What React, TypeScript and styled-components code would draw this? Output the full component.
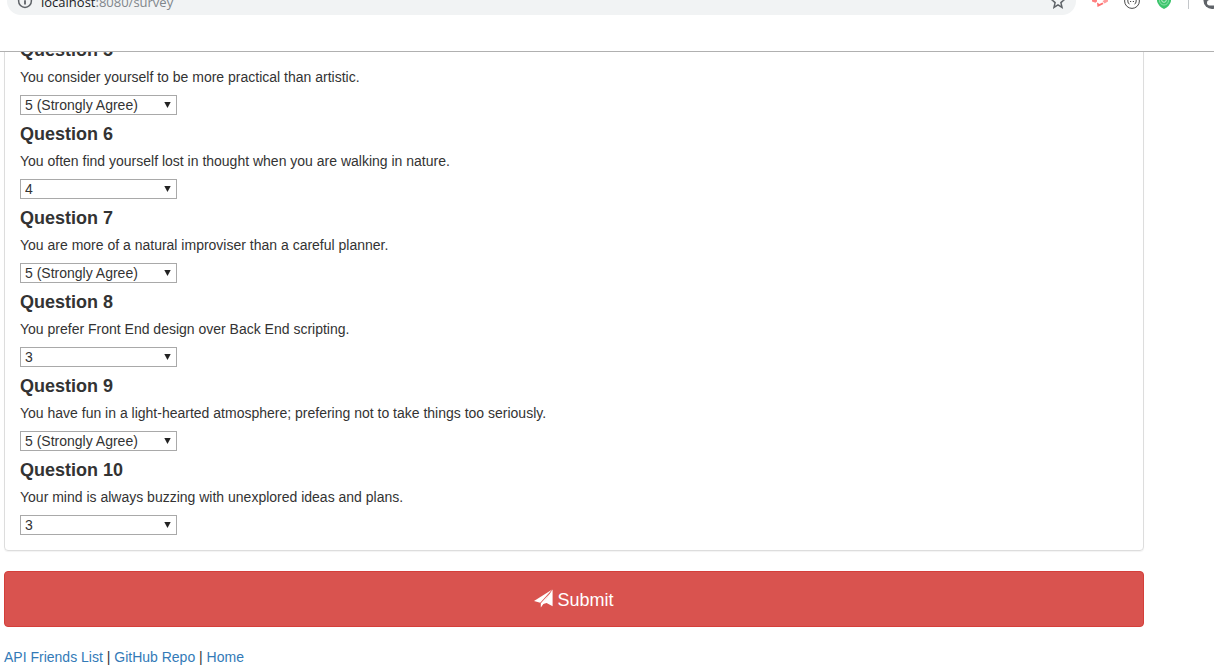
import React from "react";
import styled, { createGlobalStyle } from "styled-components";

const GlobalStyle = createGlobalStyle`
  *, *::before, *::after { box-sizing: border-box; }
  body {
    margin: 0;
    background: #fff;
    color: #333;
    font: 14px/20px "Liberation Sans", Arial, sans-serif;
  }
`;

const Page = styled.div`
  height: 100vh;
  display: flex;
  flex-direction: column;
  overflow: hidden;
`;

const Toolbar = styled.header`
  flex: none;
  height: 52px;
  display: flex;
  align-items: flex-start;
  overflow: hidden;
  border-bottom: 1px solid #b0b0b0;
`;

const AddressBar = styled.div`
  flex: 1;
  height: 28px;
  margin: -13px 0 0 7px;
  padding: 0 10px;
  display: flex;
  align-items: center;
  border-radius: 14px;
  background: #f1f3f4;
  color: #5f6368;
`;

const Url = styled.span`
  flex: 1;
  margin-left: 8px;
  padding-top: 2px;
  font: 13px/20px "Open Sans", sans-serif;
  color: #80868b;
`;

const Host = styled.span`
  color: #202124;
`;

const Extensions = styled.div`
  height: 28px;
  margin-top: -13px;
  padding-left: 16px;
  display: flex;
  align-items: center;
  gap: 16px;
`;

const Divider = styled.span`
  width: 1px;
  height: 16px;
  background: #c4c7ca;
`;

const AvatarClip = styled.div`
  width: 12px;
  height: 20px;
  margin-left: -3px;
  overflow: hidden;
`;

const Icon = styled.svg`
  display: block;
  flex: none;
`;

const Viewport = styled.main`
  flex: 1;
  min-height: 0;
  overflow: hidden;
`;

const Content = styled.form`
  max-width: 1140px;
  margin: -28px 0 0 4px;
`;

const Panel = styled.section`
  padding: 15px;
  display: grid;
  gap: 9px;
  border: 1px solid #ddd;
  border-radius: 4px;
  box-shadow: 0 1px 1px rgba(0, 0, 0, 0.05);
`;

const Title = styled.h4`
  margin: 0 0 7px;
  font-size: 18px;
  line-height: 20px;
  font-weight: 700;
`;

const Label = styled.label`
  display: block;
  margin-bottom: 8px;
`;

const SelectWrap = styled.div`
  width: 157px;
  display: grid;
  align-items: center;

  > * { grid-area: 1 / 1; }
`;

const Select = styled.select`
  appearance: none;
  width: 100%;
  height: 20px;
  padding: 0 4px;
  border: 1px solid #a9a9a9;
  border-radius: 0;
  background: #fff;
  color: #333;
  font: inherit;
  line-height: 18px;
`;

const Arrow = styled(Icon)`
  justify-self: end;
  margin-right: 6px;
  pointer-events: none;
`;

const Submit = styled.button`
  width: 100%;
  height: 56px;
  margin: 20px 0;
  padding: 2px 6px 0;
  display: flex;
  align-items: center;
  justify-content: center;
  gap: 4px;
  border: 1px solid #d43f3a;
  border-radius: 4px;
  background: #d9534f;
  color: #fff;
  font: inherit;
  font-size: 18px;
`;

const Links = styled.nav`
  a {
    color: #337ab7;
    text-decoration: none;
  }
`;

const questions = [
  { n: 5, text: "You consider yourself to be more practical than artistic.", value: "5" },
  { n: 6, text: "You often find yourself lost in thought when you are walking in nature.", value: "4" },
  { n: 7, text: "You are more of a natural improviser than a careful planner.", value: "5" },
  { n: 8, text: "You prefer Front End design over Back End scripting.", value: "3" },
  { n: 9, text: "You have fun in a light-hearted atmosphere; prefering not to take things too seriously.", value: "5" },
  { n: 10, text: "Your mind is always buzzing with unexplored ideas and plans.", value: "3" },
];

const options = [
  ["1", "1 (Strongly Disagree)"],
  ["2", "2"],
  ["3", "3"],
  ["4", "4"],
  ["5", "5 (Strongly Agree)"],
];

function Question({ n, text, value }: { n: number; text: string; value: string }) {
  const id = `question-${n}`;
  return (
    <div>
      <Title>Question {n}</Title>
      <Label htmlFor={id}>{text}</Label>
      <SelectWrap>
        <Select id={id} defaultValue={value}>
          {options.map(([v, label]) => (
            <option key={v} value={v}>{label}</option>
          ))}
        </Select>
        <Arrow width="7" height="6" viewBox="0 0 7 6" aria-hidden>
          <path d="M0.300 0h6.400L3.500 6z" fill="#222" />
        </Arrow>
      </SelectWrap>
    </div>
  );
}

export default function App() {
  return (
    <Page>
      <GlobalStyle />
      <Toolbar>
        <AddressBar>
          <Icon width="16" height="16" viewBox="0 0 16 16" fill="none" stroke="#5f6368" strokeWidth="1.5">
            <circle cx="8" cy="8" r="6.4" />
            <path d="M8 7.2v4.3M8 4.2v1.6" strokeWidth="1.8" />
          </Icon>
          <Url><Host>localhost</Host>:8080/survey</Url>
          <Icon width="16" height="16" viewBox="0 0 16 16" fill="none" stroke="#5f6368" strokeWidth="1.5">
            <path d="M8 1.800l1.800 4.200 4.600.5-3.500 3.100 1.100 4.700-4-2.500-4 2.500 1.100-4.700-3.500-3.100 4.600-.5z" />
          </Icon>
        </AddressBar>
        <Extensions>
          <Icon width="16" height="16" viewBox="0 0 16 16">
            <path d="M0 4l5 1v3.500l-1.500 1.200L0 8.500z" fill="#ff8080" />
            <path d="M5 9.500l2.500 1.500 3-1.500 1 1.500L5.500 14z" fill="#ff7070" />
            <path d="M10.500 8l2-1V4L16 3v5.500L12.500 10.500z" fill="#ff9c9c" />
          </Icon>
          <Icon width="16" height="16" viewBox="0 0 16 16" fill="none" stroke="#4a4a4a">
            <circle cx="8" cy="8" r="7.4" />
            <path d="M5 4.500q-1.500 0-1.200 3.500.2 3 1.700 3M11 4.500q1.500 0 1.200 3.500-.2 3-1.700 3M6 8.500h1.200M8.800 8.500H10" />
          </Icon>
          <Icon width="16" height="16" viewBox="0 0 16 16" fill="none">
            <path d="M1 1h14v7q-1 5-7 8-6-3-7-8z" fill="#3cc46c" />
            <path d="M3.500 5v2.500a4.500 4.500 0 0 0 9 0V5" stroke="#8ce2aa" />
            <circle cx="8" cy="7" r="2.300" stroke="#c5f0d3" />
          </Icon>
          <Divider />
          <AvatarClip>
            <Icon width="20" height="20" viewBox="0 0 20 20">
              <circle cx="10" cy="9.500" r="8.500" fill="#5f6368" />
              <rect x="5" y="9" width="12" height="5.500" rx="2.700" fill="#fff" />
            </Icon>
          </AvatarClip>
        </Extensions>
      </Toolbar>
      <Viewport>
        <Content onSubmit={(e) => e.preventDefault()}>
          <Panel>
            {questions.map((q) => <Question key={q.n} {...q} />)}
          </Panel>
          <Submit type="submit">
            <Icon width="19" height="22" viewBox="0 0 19 22" fill="#fff" aria-hidden>
              <path d="M0 12L18.200 0.500 6.200 13.800z" />
              <path d="M18.600 0.500V17.300L12.600 14 9.400 14.900 6.800 18.600V14.300L15.500 4.800 9.500 14z" />
            </Icon>
            Submit
          </Submit>
          <Links>
            <a href="#api">API Friends List</a> | <a href="#repo">GitHub Repo</a> | <a href="#home">Home</a>
          </Links>
        </Content>
      </Viewport>
    </Page>
  );
}
